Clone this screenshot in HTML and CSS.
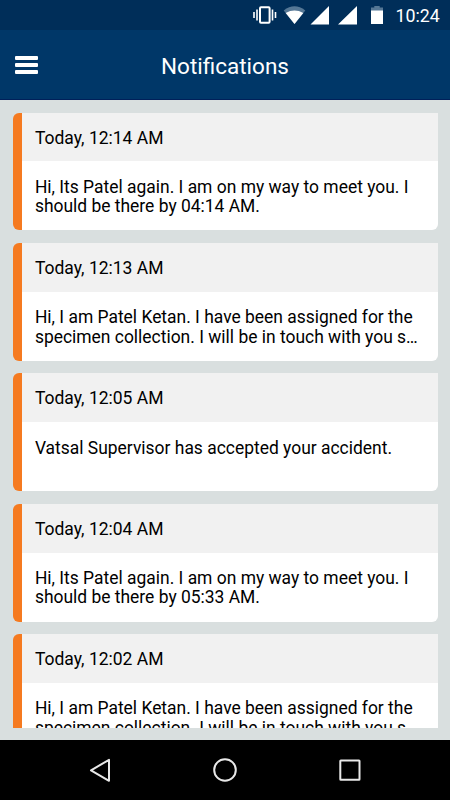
FILE: index.html
```html
<!DOCTYPE html>
<html lang="en">

<head>
    <meta charset="UTF-8">
    <meta name="viewport" content="width=device-width, initial-scale=1.0">
    <link rel="stylesheet" href="styles.css">
    <title>Notifications</title>
</head>

<body>

    <div class="status-bar">
        <svg class="status-icons" width="134" height="30" viewBox="252 0 134 30">
            <!-- vibrate -->
            <rect x="260" y="7.2" width="9.6" height="15.6" rx="1" fill="none" stroke="#fff" stroke-width="2" />
            <path d="M257 9.5v11M254 12v6M272.5 9.5v11M275.5 12v6" stroke="#fff" stroke-width="1.6" />
            <!-- wifi -->
            <path d="M283.7 10.5Q294.5 2.2 305.3 10.5L294.5 24Z" fill="#557795" />
            <path d="M285.7 13Q294.5 8.2 303.3 13L294.5 24Z" fill="#fff" />
            <!-- signal -->
            <path d="M329 6v18.5h-18.5ZM357 6v18.5h-19Z" fill="#fff" />
            <!-- battery -->
            <path d="M371 11V7.5h3.3V6h5.4v1.5h3.3V11Z" fill="#557795" />
            <path d="M371 10.5h12v13.5h-12Z" fill="#fff" />
        </svg>
        <span class="clock">10:24</span>
    </div>

    <header class="header">
        <button class="menu-button" aria-label="Menu">
            <span></span>
            <span></span>
            <span></span>
        </button>
        <h1>Notifications</h1>
    </header>

    <main class="content">
        <div class="list">
            <div class="card">
                <div class="card-date">Today, 12:14 AM</div>
                <div class="card-body"><p>Hi, Its Patel again. I am on my way to meet you. I should be there by 04:14 AM.</p></div>
            </div>
            <div class="card">
                <div class="card-date">Today, 12:13 AM</div>
                <div class="card-body"><p>Hi, I am Patel Ketan. I have been assigned for the specimen collection. I will be in touch with you s…</p></div>
            </div>
            <div class="card">
                <div class="card-date">Today, 12:05 AM</div>
                <div class="card-body"><p>Vatsal Supervisor has accepted your accident.</p></div>
            </div>
            <div class="card">
                <div class="card-date">Today, 12:04 AM</div>
                <div class="card-body"><p>Hi, Its Patel again. I am on my way to meet you. I should be there by 05:33 AM.</p></div>
            </div>
            <div class="card">
                <div class="card-date">Today, 12:02 AM</div>
                <div class="card-body"><p>Hi, I am Patel Ketan. I have been assigned for the specimen collection. I will be in touch with you s…</p></div>
            </div>
        </div>
    </main>

    <nav class="nav-bar">
        <svg width="26" height="26" viewBox="0 0 26 26"><path d="M22 2.8v21L4 13.3Z" /></svg>
        <svg width="26" height="26" viewBox="0 0 26 26"><circle cx="13" cy="13" r="10.8" /></svg>
        <svg width="26" height="26" viewBox="0 0 26 26"><rect x="3.3" y="3.5" width="19.2" height="19.2" rx="0.5" /></svg>
    </nav>

</body>

</html>
```

FILE: styles.css
```css
* {
    box-sizing: border-box;
}

body {
    margin: 0;
    height: 800px;
    display: flex;
    flex-direction: column;
    font-family: Roboto, sans-serif;
    background-color: #d9dfdf;
    overflow: hidden;
}

.status-bar {
    display: flex;
    justify-content: flex-end;
    align-items: center;
    height: 30px;
    flex: none;
    padding-right: 10px;
    background-color: #002e59;
    color: #fff;
}

.clock {
    width: 44.5px;
    margin-left: 9.5px;
    font-size: 17.8px;
    line-height: 30px;
    padding-top: 1px;
    white-space: nowrap;
}

.header {
    display: grid;
    grid-template-columns: 50px 1fr 50px;
    align-items: center;
    height: 70px;
    flex: none;
    background-color: #003768;
    border-bottom: 1px solid #00205a;
    color: #fff;
}

.header h1 {
    margin: 2px 0 0;
    text-align: center;
    font-size: 22.5px;
    font-weight: normal;
}

.menu-button {
    display: flex;
    flex-direction: column;
    gap: 2.5px;
    width: 23px;
    margin: 1px 0 0 15px;
    padding: 0;
    border: none;
    background: none;
}

.menu-button span {
    height: 4.5px;
    border-radius: 1px;
    background-color: #fff;
}

.content {
    flex: 1;
    min-height: 0;
    padding: 12.5px 12.5px;
}

.list {
    display: flex;
    flex-direction: column;
    gap: 12.5px;
    height: 100%;
    overflow: hidden;
}

.card {
    flex: none;
    height: 117.9px;
    border-left: 9.5px solid #f57a20;
    border-radius: 6px 0 6px 6px;
    background-color: #fff;
    overflow: hidden;
}

.card-date {
    height: 48.9px;
    padding-left: 13.4px;
    background-color: #f1f1f1;
    font-size: 17.5px;
    line-height: 51px;
}

.card-body {
    padding: 16.4px 13px 0 13.4px;
}

.card-body p {
    margin: 0;
    font-size: 17.44px;
    line-height: 19.4px;
}

.nav-bar {
    display: flex;
    justify-content: center;
    align-items: center;
    gap: 99px;
    height: 60px;
    flex: none;
    background-color: #000;
}

.nav-bar svg {
    fill: none;
    stroke: #e8e8e8;
    stroke-width: 2;
    stroke-linejoin: round;
}
```
